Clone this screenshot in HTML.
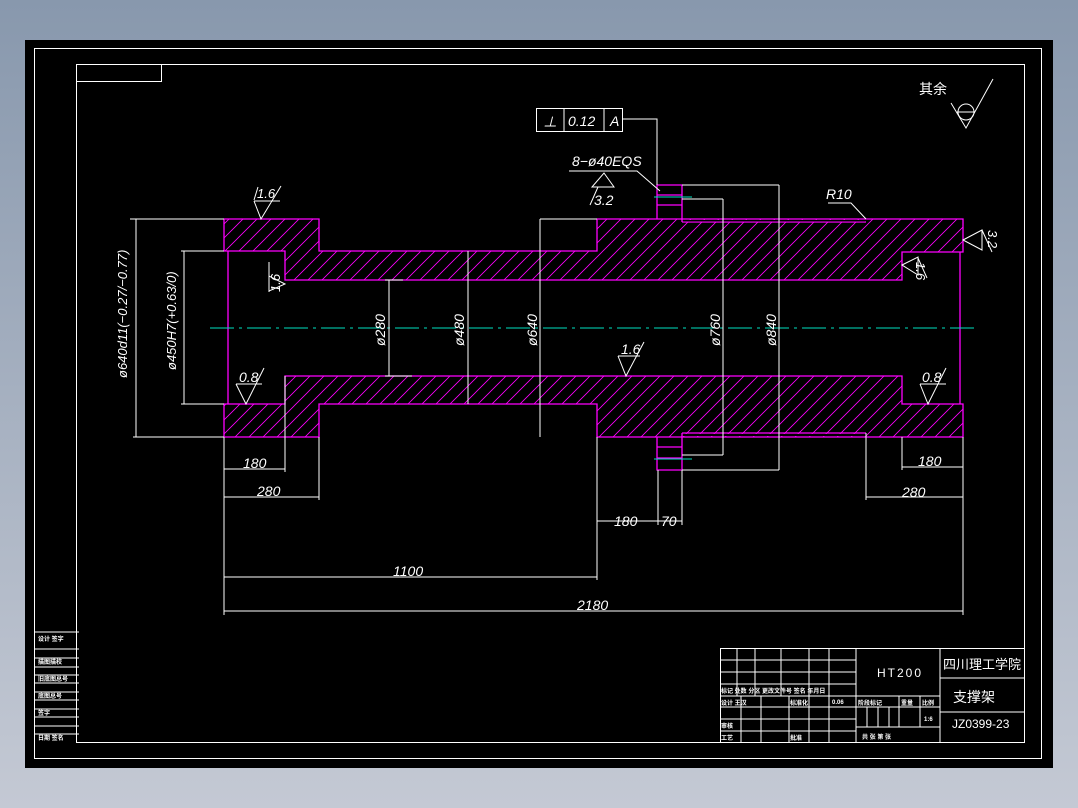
<!DOCTYPE html>
<html><head><meta charset="utf-8"><style>
html,body{margin:0;padding:0;width:1078px;height:808px;overflow:hidden;background:linear-gradient(#8898ad,#c4c9d4);}
svg{position:absolute;left:0;top:0}
text{font-family:"Liberation Sans","Noto Sans CJK SC",sans-serif;fill:#fff}
.d{font-style:italic;font-size:14px}
</style></head><body>
<svg width="1078" height="808" viewBox="0 0 1078 808">
<defs>
<pattern id="h" patternUnits="userSpaceOnUse" width="14" height="14">
<path d="M-1,15 L15,-1 M-4,4 L4,-4 M10,18 L18,10" stroke="#ff00ff" stroke-width="0.8"/>
</pattern>
</defs>
<rect x="25" y="40" width="1028" height="728" fill="#000"/>
<g fill="none" stroke="#fff" stroke-width="1">
<rect x="34.5" y="48.5" width="1007" height="710"/>
<rect x="76.5" y="64.5" width="948" height="678"/>
<rect x="76.5" y="64.5" width="85" height="17"/>
<path d="M35 632H79M35 649H79M35 658H79M35 667H79M35 675H79M35 683H79M35 692H79M35 700H79M35 709H79M35 717H79M35 726H79M35 734H79"/>
<rect x="720.5" y="648.5" width="304" height="94"/>
<path d="M720 660H856M720 672H856M720 684H856M720 696H940M720 707H940M720 719H856M720 731H856M856 727H940M856 696H940"/>
<path d="M737 648V696M755 648V696M781 648V696M809 648V743M829 648V743M856 648V743M741 696V743M761 696V743M789 696V743M899 696V727M920 696V727M867 707V727M878 707V727M889 707V727M940 648V743M940 678H1025M940 712H1025"/>
</g>
<g fill="url(#h)" stroke="#ff00ff" stroke-width="1.3">
<path d="M224 219H319V251H597V219H963V252H902V280H285V251H224Z"/>
<path d="M224 404H285V376H902V404H963V437H597V404H319V437H224Z"/>
</g>
<g fill="none" stroke="#ff00ff" stroke-width="1.3">
<path d="M682 222H866M682 433H866M228 251V404M960 252V404"/>
<path d="M657 219V185H682V222M657 437V470H682V433M657 195H682M657 205H682M657 458H682M657 447H682"/>
</g>
<rect x="683" y="220" width="182" height="1.5" fill="#000"/>
<rect x="683" y="434" width="182" height="2" fill="#000"/>
<g stroke="#00e0c0" stroke-width="1">
<path d="M210 328H975" stroke-dasharray="24 5 3 5"/>
<path d="M654 197H692M654 459H692"/>
</g>
<g fill="none" stroke="#fff" stroke-width="1">
<path d="M130 219H224M133 437H224M136 219V437M181 251H224M181 404H224M184 251V404"/>
<path d="M389 280V376M385 280H403M385 376H412M468 251V404M540 219V437M540 219H597M723 199V455M682 199H723M682 455H723M779 185V470M682 185H779M682 470H779"/>
<path d="M224 437V615M285 376V472M319 437V500M597 437V580M658 470V525M682 470V525M866 433V500M902 437V470M963 437V615"/>
<path d="M224 469H285M224 497H319M224 577H597M224 611H963M597 521H658M658 521H682M902 467H963M866 497H963"/>
<rect x="536.5" y="108.5" width="86" height="23"/>
<path d="M564 108V131M604 108V131M622 119H657V185M569 171H637L660 191"/>
<path d="M592 187L604 173L614 187Z M598 187L590 205"/>
<path d="M828 203H851L866 219"/>
<path d="M254 201H280M254 201L261 219L281 186M254 200L258 187"/>
<path d="M285 284L269 276V291ZM269 262V292"/>
<path d="M236 384H262M236 384L246 404L264 368"/>
<path d="M618 356H640M618 356L626 376L644 342"/>
<path d="M920 384H946M920 384L928 404L946 368"/>
<path d="M902 265L918 257V275ZM918 258L927 278"/>
<path d="M963 240L982 230V250ZM982 230L992 252"/>
<path d="M951 103L966 128L993 79M957 112H975"/>
<circle cx="966" cy="112" r="8"/>
</g>
<g class="d">
<text x="257" y="198" font-size="13">1.6</text>
<text x="572" y="166">8−ø40EQS</text>
<text x="594" y="205">3.2</text>
<text x="568" y="126">0.12</text>
<text x="610" y="126">A</text>
<text x="543" y="127">⊥</text>
<text x="826" y="199">R10</text>
<text x="239" y="382">0.8</text>
<text x="621" y="354">1.6</text>
<text x="922" y="382">0.8</text>
<text x="243" y="468">180</text>
<text x="257" y="496">280</text>
<text x="393" y="576">1100</text>
<text x="577" y="610">2180</text>
<text x="614" y="526">180</text>
<text x="661" y="526">70</text>
<text x="918" y="466">180</text>
<text x="902" y="497">280</text>
<text transform="translate(280,292) rotate(-90)" font-size="13">1.6</text>
<text transform="translate(916,262) rotate(90)" font-size="13">1.6</text>
<text transform="translate(988,230) rotate(90)" font-size="13">3.2</text>
<text transform="translate(127,378) rotate(-90)" font-size="13">ø640d11(−0.27/−0.77)</text>
<text transform="translate(176,370) rotate(-90)" font-size="13">ø450H7(+0.63/0)</text>
<text transform="translate(385,346) rotate(-90)">ø280</text>
<text transform="translate(464,346) rotate(-90)">ø480</text>
<text transform="translate(537,346) rotate(-90)">ø640</text>
<text transform="translate(720,346) rotate(-90)">ø760</text>
<text transform="translate(776,346) rotate(-90)">ø840</text>
</g>
<text x="919" y="94" font-size="14">其余</text>
<text x="877" y="677" font-size="12" letter-spacing="2">HT200</text>
<text x="943" y="669" font-size="13">四川理工学院</text>
<text x="953" y="702" font-size="14">支撑架</text>
<text x="952" y="728" font-size="12">JZ0399-23</text>
<g font-size="6" font-weight="bold">
<text x="721" y="693">标记 处数 分区 更改文件号 签名 年月日</text>
<text x="721" y="705">设计 王汉</text><text x="790" y="705">标准化</text><text x="832" y="704">0.06</text>
<text x="858" y="705">阶段标记</text><text x="901" y="705">重量</text><text x="922" y="705">比例</text>
<text x="924" y="721">1:6</text>
<text x="721" y="728">审核</text><text x="721" y="740">工艺</text><text x="790" y="740">批准</text>
<text x="862" y="739">共  张 第  张</text>
<text x="38" y="641">设计 签字</text><text x="38" y="664">描图描校</text><text x="38" y="681">旧底图总号</text>
<text x="38" y="698">底图总号</text><text x="38" y="715">签字</text><text x="38" y="740">日期 签名</text>
</g>
</svg>
</body></html>
